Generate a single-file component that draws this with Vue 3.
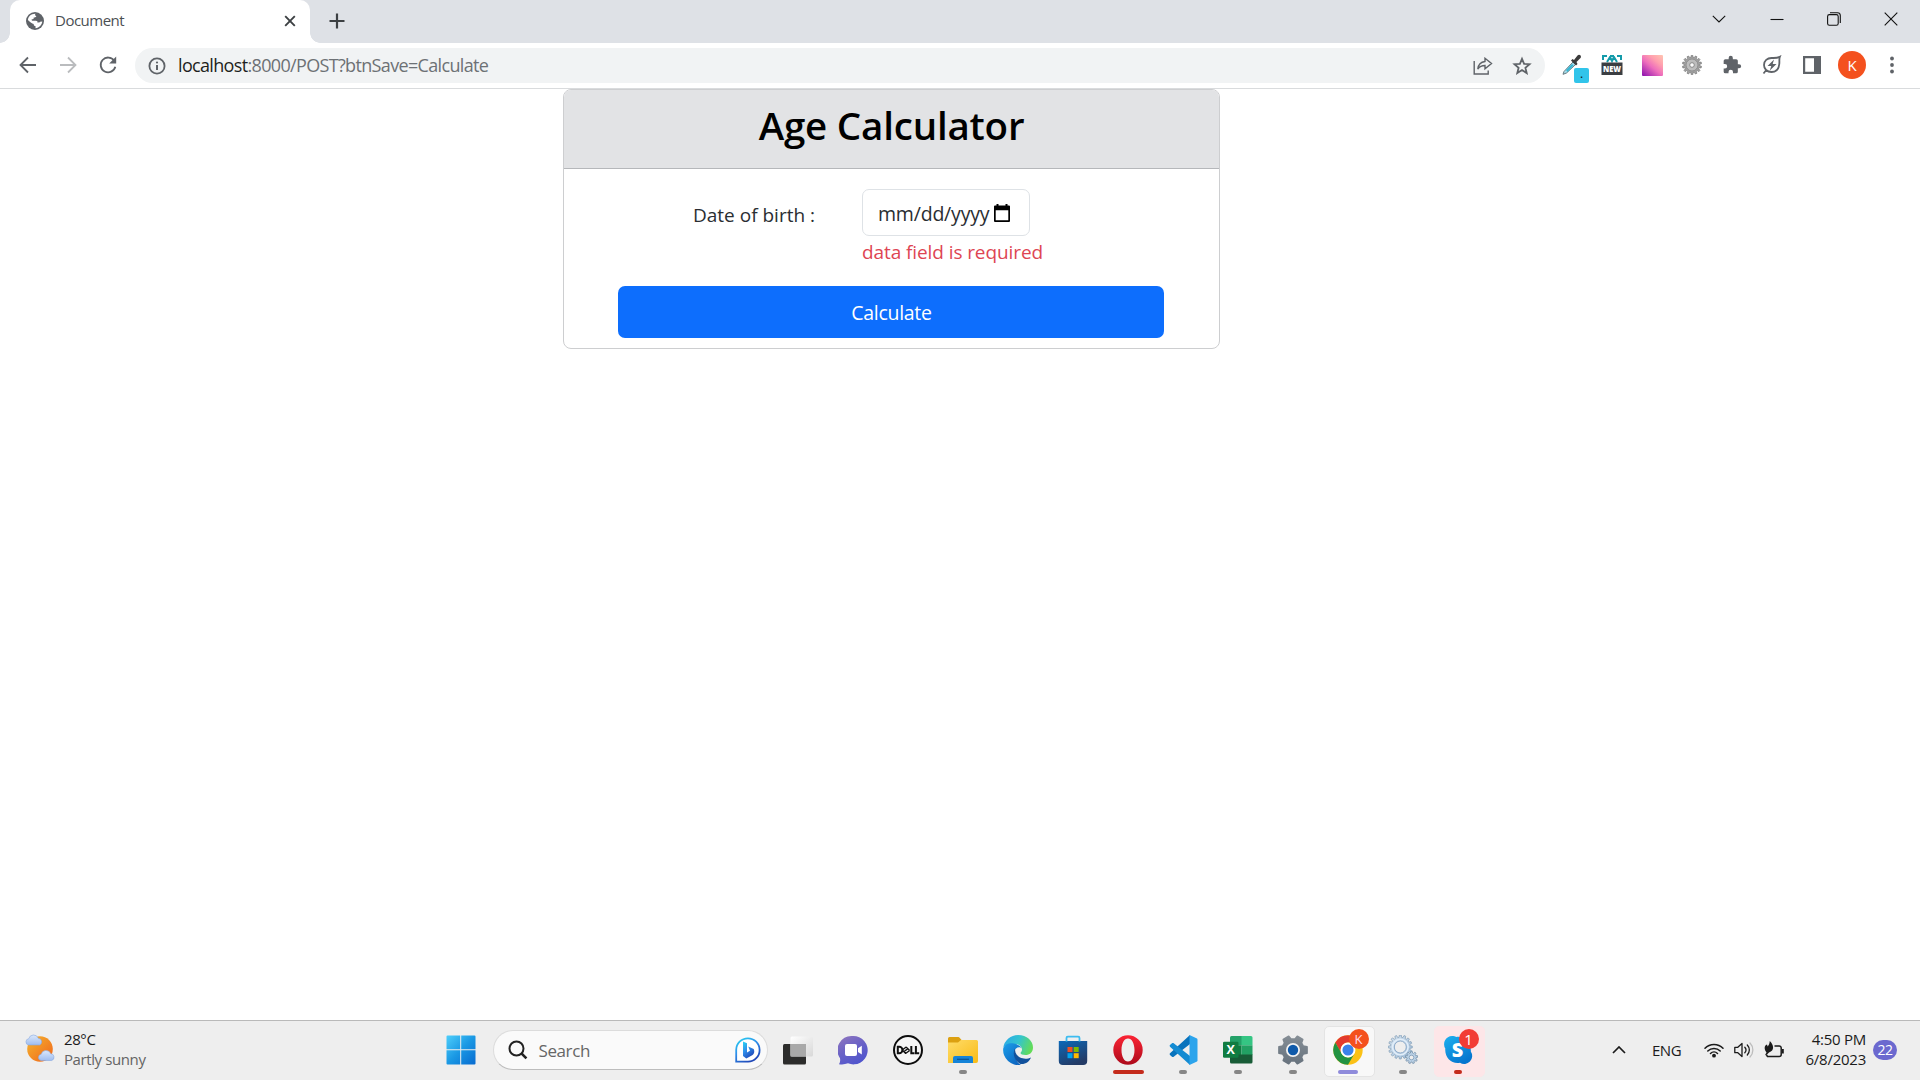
<script setup>
const gear = (teeth, outer, inner, c, half = 0.26) => {
  const pts = []
  const step = (Math.PI * 2) / teeth
  for (let i = 0; i < teeth; i++) {
    const a = i * step - Math.PI / 2
    const at = (r, t) => `${(c + r * Math.cos(t)).toFixed(2)} ${(c + r * Math.sin(t)).toFixed(2)}`
    pts.push(at(inner, a - step * (half + 0.06)), at(outer, a - step * half * 0.75), at(outer, a + step * half * 0.75), at(inner, a + step * (half + 0.06)))
  }
  return 'M' + pts.join('L') + 'Z'
}
const extGear = gear(14, 9.6, 7.6, 10)
const settingsGear = gear(6, 14.4, 11, 15, 0.28)
const bigCog = gear(16, 12, 9.8, 13)
const smallCog = gear(9, 6.2, 4.6, 7)
</script>

<template>
  <div class="screen">
    <header class="tabstrip">
      <div class="tab">
        <svg class="favicon" width="18" height="18" viewBox="0 0 18 18">
          <circle cx="9" cy="9" r="9" fill="#5f6368" />
          <path d="M9.5 1.8C8.7 2.6 9 3.8 10.3 4c-.2 1.3-1.2 1.6-2.6 1.4C7.9 7 7 7.3 5.7 7.2c-.1 1 .2 1.5 1.2 1.5h3c1.3 0 1.8.8 1.7 2 1.3 0 2-.3 2.500-.9l2.200-.2c-.5 3.600-3 6.300-6.800 6.600l.1-2c-1.300-.1-2-.8-1.900-2.200C6 11.900 3.500 9.700 1.900 8 2.200 4.500 5.300 1.600 9.500 1.800z" fill="#fff" />
        </svg>
        <span class="tab-title">Document</span>
        <svg class="tab-close" width="12" height="12" viewBox="0 0 12 12"><path d="M1.200 1.200l9.600 9.600M10.800 1.200L1.200 10.800" stroke="#3c4043" stroke-width="1.900" /></svg>
      </div>
      <svg class="plus" width="16" height="16" viewBox="0 0 16 16"><path d="M8 .5v15M.5 8h15" stroke="#3c4043" stroke-width="2.200" /></svg>
      <div class="wincontrols">
        <span><svg width="14" height="14" viewBox="0 0 14 14"><path d="M.8 3.800L7 10l6.200-6.200" class="thin" /></svg></span>
        <span><svg width="14" height="14" viewBox="0 0 14 14"><path d="M.5 7.500h13" class="thin" /></svg></span>
        <span><svg width="14" height="14" viewBox="0 0 14 14"><rect x=".6" y="2.600" width="10.600" height="10.600" rx="1.800" class="thin" /><path d="M3 .7h7.500a2.800 2.800 0 0 1 2.800 2.800V11" class="thin" /></svg></span>
        <span><svg width="14" height="14" viewBox="0 0 14 14"><path d="M.7.700l12.600 12.600M13.300.700L.7 13.300" class="thin" /></svg></span>
      </div>
    </header>

    <nav class="toolbar">
      <svg class="nav-icon" width="20" height="20" viewBox="0 0 20 20"><path d="M18 10H3M10 2.500L2.500 10l7.500 7.500" class="line" /></svg>
      <svg class="nav-icon" width="20" height="20" viewBox="0 0 20 20"><path d="M2 10h15M10 2.500l7.500 7.500-7.500 7.500" class="line pale" /></svg>
      <svg class="nav-icon" width="20" height="20" viewBox="0 0 20 20"><path d="M16.200 5.700A7.400 7.400 0 1 0 17.300 11.700" class="line" /><path d="M18.200 1.500v7h-7z" fill="#5f6368" /></svg>
      <div class="omnibox">
        <svg width="18" height="18" viewBox="0 0 18 18"><circle cx="9" cy="9" r="7.600" class="line" /><path d="M9 8v5" stroke="#5f6368" stroke-width="2" /><circle cx="9" cy="5.500" r="1.100" fill="#5f6368" /></svg>
        <p class="url"><b>localhost</b>:8000/POST?btnSave=Calculate</p>
        <svg class="share" width="20" height="18" viewBox="0 0 20 18"><path d="M1.200 4v13h14v-3.500" class="line slim" /><path d="M12 1.300l6.500 5.200-6.500 5.200V8.500c-3.200 0-5.300.8-7.200 3.500.5-4.300 2.900-7 7.200-7.500z" class="line slim" /></svg>
        <svg width="20" height="20" viewBox="0 0 20 20"><path d="M10 2.800l2.100 5 5.400.4-4.100 3.500 1.300 5.300-4.700-2.900L5.300 17l1.300-5.300-4.100-3.500 5.400-.4z" class="line" /></svg>
      </div>
      <div class="extensions">
        <span class="ext">
          <svg width="20" height="22" viewBox="0 0 20 22"><path d="M2 17.500L11 8l2.500 2.500-9 8.500-3.500 1.300z" fill="#a5dbe9" stroke="#667b82" /><path d="M4 16l6-6 1.500 1.500L5.500 18z" fill="#36b8d6" /><path d="M9 6.500l1.500-1.500 1.500 1 3.500-4.500c2-1.800 4.500.5 3 2.500L14.500 8l1 2-1.500 1.500z" fill="#3b3b3b" /></svg>
          <i class="blue-badge">.</i>
        </span>
        <span class="ext">
          <svg class="new-icon" width="22" height="26" viewBox="0 0 22 26"><path d="M2 6V2h4m3 0h4m3 0h4v4M6 8l3-5 2 4 2-4 3 5" fill="none" stroke="#149baa" stroke-width="2" /><rect x="0.500" y="8.500" width="21" height="12.500" fill="#3b3e42" /><text x="11" y="18" text-anchor="middle" font-size="9" font-weight="800" fill="#fff" textLength="18" lengthAdjust="spacingAndGlyphs">NEW</text></svg>
        </span>
        <span class="ext"><i class="gradient" /></span>
        <span class="ext">
          <svg width="20" height="20" viewBox="0 0 20 20"><path :d="extGear" fill="#a2a2a2" stroke="#777" stroke-width=".7" /><circle cx="10" cy="10" r="6" fill="#bdbdbd" stroke="#858585" stroke-width=".8" /><circle cx="10" cy="10" r="2.300" fill="#fafafa" stroke="#777" stroke-width=".8" /></svg>
        </span>
        <span class="ext"><svg width="20" height="20" viewBox="0 0 24 24"><path fill="#5f6368" d="M20.500 11H19V7a2 2 0 0 0-2-2h-4V3.500a2.500 2.500 0 0 0-5 0V5H4a2 2 0 0 0-2 2v3.800h1.500a2.700 2.700 0 0 1 0 5.400H2V20a2 2 0 0 0 2 2h3.800v-1.500a2.700 2.700 0 0 1 5.400 0V22H17a2 2 0 0 0 2-2v-4h1.500a2.500 2.500 0 0 0 0-5z" /></svg></span>
        <span class="ext"><svg width="20" height="20" viewBox="0 0 20 20"><path d="M17.800 1.800c-.8 2-.2 4.200-.5 7.200-.5 5-3.600 8-7.800 8-4.500 0-7.500-3-7.500-7 0-4.300 3.300-7 7.500-7 3.500 0 5.500.3 8.300-1.200zM4.500 14.800l-3 3.700" class="line" /><path d="M12 4.500l-6.500 6.500h3.800L7.800 15.500l6.700-6.500h-3.800z" fill="#5f6368" /></svg></span>
        <span class="ext"><svg width="18" height="18" viewBox="0 0 18 18"><path fill="#5f6368" fill-rule="evenodd" d="M0 0h18v18H0zM2.200 2.200v13.600h8.800V2.200z" /></svg></span>
        <span class="ext"><i class="avatar">K</i></span>
        <span class="ext"><svg width="4" height="18" viewBox="0 0 4 18" fill="#5f6368"><circle cx="2" cy="2.500" r="1.900" /><circle cx="2" cy="9" r="1.900" /><circle cx="2" cy="15.500" r="1.900" /></svg></span>
      </div>
    </nav>

    <main class="page">
      <form class="card" @submit.prevent>
        <h1>Age Calculator</h1>
        <div class="card-body">
          <div class="field-row">
            <label for="dob">Date of birth :</label>
            <div class="field">
              <div id="dob" class="date-input">
                <span>mm/dd/yyyy</span>
                <svg width="16" height="18" viewBox="0 0 16 18"><path fill-rule="evenodd" d="M2.500 0h2v1.500h7V0h2v1.500H15a1 1 0 0 1 1 1V17a1 1 0 0 1-1 1H1a1 1 0 0 1-1-1V2.500a1 1 0 0 1 1-1h1.500zM1.700 6.200v10h12.600v-10z" /></svg>
              </div>
              <p class="error">data field is required</p>
            </div>
          </div>
          <button type="submit"><span>Calculate</span></button>
        </div>
      </form>
    </main>

    <footer class="taskbar">
      <div class="weather">
        <svg width="32" height="30" viewBox="0 0 32 30">
          <defs>
            <linearGradient id="sun" x1="0" y1="0" x2="1" y2="1"><stop offset="0" stop-color="#f5b62d" /><stop offset="1" stop-color="#f0641c" /></linearGradient>
            <linearGradient id="cloud" x1="0" y1="0" x2="0" y2="1"><stop offset="0" stop-color="#dbe8fb" /><stop offset="1" stop-color="#9fbdf0" /></linearGradient>
          </defs>
          <circle cx="16" cy="15" r="12.800" fill="url(#sun)" />
          <path d="M4.500 11a3.200 3.200 0 0 1 .2-6.300 5 5 0 0 1 9.500-.5 3.600 3.600 0 0 1 1.500 6.800z" fill="url(#cloud)" stroke="#8aa9df" stroke-width=".6" />
          <path d="M17 26.500a3.200 3.200 0 0 1 .2-6.300 5 5 0 0 1 9.500-.5 3.500 3.500 0 0 1 1 6.800z" fill="url(#cloud)" stroke="#8aa9df" stroke-width=".6" />
        </svg>
        <p class="weather-text"><span class="temp">28°C</span><span class="cond">Partly sunny</span></p>
      </div>

      <svg class="start" width="30" height="30" viewBox="0 0 30 30">
        <defs><linearGradient id="win" gradientUnits="userSpaceOnUse" x1="0" y1="0" x2="30" y2="30"><stop offset="0" stop-color="#4fd0fb" /><stop offset=".5" stop-color="#1a98e4" /><stop offset="1" stop-color="#0769cf" /></linearGradient></defs>
        <path fill="url(#win)" d="M1.500.5H14.200v13.700H.5V1.500a1 1 0 0 1 1-1zM15.200.5h13.300a1 1 0 0 1 1 1v12.700H15.200zM.5 15.200h13.700v14.300H1.500a1 1 0 0 1-1-1zM15.200 15.200h14.300v13.300a1 1 0 0 1-1 1H15.200z" />
      </svg>
      <div class="search">
        <svg width="20" height="20" viewBox="0 0 20 20"><circle cx="8.500" cy="8.500" r="7" fill="none" stroke="#222" stroke-width="2" /><path d="M13.200 13.200l5.200 5.200" stroke="#222" stroke-width="2.600" /></svg>
        <span class="search-text">Search</span>
        <svg width="26" height="26" viewBox="0 0 26 26">
          <defs><linearGradient id="bing" x1="0" y1="0" x2=".6" y2="1"><stop offset="0" stop-color="#27d6f2" /><stop offset=".5" stop-color="#2f8eea" /><stop offset="1" stop-color="#2148b8" /></linearGradient></defs>
          <path d="M1.200 24.700V13A11.700 11.700 0 1 1 13 24.700z" fill="#fff" stroke="url(#bing)" stroke-width="1.800" />
          <path d="M8 4.500l4 1.700v9.300l3-1.800-1.800-4.200 5.500 2.500c1.300 3 .3 5-1.500 6.200L11.300 21.500 8 19z" fill="url(#bing)" />
        </svg>
      </div>

      <div class="apps">
        <span class="app">
          <svg width="30" height="30" viewBox="0 0 30 30"><defs><linearGradient id="tv" x1="0" y1="0" x2="1" y2="1"><stop offset="0" stop-color="#fff" /><stop offset="1" stop-color="#d8d8d8" /></linearGradient></defs><rect x="0" y="9" width="23" height="20.500" rx="1.500" fill="#2c2c2b" /><rect x="7.500" y="1.500" width="22.500" height="20" rx="1.500" fill="url(#tv)" /><path d="M7.500 9H23v12.500H7.500z" fill="#a9a9a9" /></svg>
        </span>
        <span class="app">
          <svg width="30" height="30" viewBox="0 0 30 30"><defs><linearGradient id="chat" x1="0" y1="0" x2=".6" y2="1"><stop offset="0" stop-color="#9277bd" /><stop offset=".5" stop-color="#6c63c6" /><stop offset="1" stop-color="#5055cd" /></linearGradient></defs><path d="M15 1a14.200 14.200 0 1 1-5 27.300c-3 1.200-6 1.300-9 .9 1.200-2 1.400-3.700 1-6A14.200 14.200 0 0 1 15 1z" fill="url(#chat)" /><rect x="7" y="9" width="12" height="12" rx="2" fill="#fff" /><path d="M20 13.200l3.800-2.500v8.800L20 17z" fill="#fff" /></svg>
        </span>
        <span class="app">
          <svg width="30" height="30" viewBox="0 0 30 30"><circle cx="15" cy="15" r="14" fill="#f6f6f6" stroke="#0d0d0d" stroke-width="2" /><g fill="none" stroke="#111" stroke-width="2"><path d="M4.800 11.800v6.500h1.400a3.200 3.200 0 0 0 0-6.500z" /><path d="M9.200 15l4-3M10.800 16.700l4.400-3.300M12.500 18.500l4.200-3M9.200 15l3.500 3.500M13 12l3.500 3.300" stroke-width="1.400" /><path d="M18.300 11v7.200h3.200M22.900 11v7.200h3.300" /></g></svg>
        </span>
        <span class="app">
          <svg width="30" height="30" viewBox="0 0 30 30"><defs><linearGradient id="fold" x1="0" y1="0" x2="1" y2="1"><stop offset="0" stop-color="#ffdc69" /><stop offset="1" stop-color="#f8bb16" /></linearGradient></defs><path d="M0 3.500A1.500 1.500 0 0 1 1.500 2h8.300c1 0 1.500.4 2 1L14 5.500V12H0z" fill="#dca011" /><path d="M0 7.500h10l3-2.500h15.500A1.500 1.500 0 0 1 30 6.500V26a2 2 0 0 1-2 2H0z" fill="url(#fold)" /><path d="M5 28v-5a2 2 0 0 1 2-2h16a2 2 0 0 1 2 2v5z" fill="#1684d8" /><path d="M9 24.300h12" stroke="#0c5493" stroke-width="1.200" /></svg>
          <i class="dot" />
        </span>
        <span class="app">
          <svg width="30" height="30" viewBox="0 0 30 30"><defs><linearGradient id="edge1" x1="0" y1=".2" x2="1" y2=".5"><stop offset="0" stop-color="#2ba9e8" /><stop offset=".5" stop-color="#33c4cf" /><stop offset="1" stop-color="#63dc58" /></linearGradient><linearGradient id="edge2" x1="0" y1="0" x2=".8" y2="1"><stop offset="0" stop-color="#1b9fea" /><stop offset="1" stop-color="#0c62be" /></linearGradient></defs><path d="M.3 12.500A15 15 0 0 1 15 0c9 0 15 6 15 12.500 0 5-3.500 7.500-7.500 7.500-3 0-5-1-5-2 0-.7 1.500-1.300 1.500-3.500 0-3-3-5.500-7.500-5.500S2.500 9.500.3 12.500z" fill="url(#edge1)" /><path d="M.2 13.500C1.500 9 6.500 7.500 11 8.500c4 .8 7 3.200 8 5.200-2-2.500-7-1.500-7.500 3-.5 4 2 11.500 6.500 13A15 15 0 0 1 .2 13.500z" fill="url(#edge2)" /><path d="M12 13.500c-3 5-.5 13 5.500 15.500 5 .5 9-2.500 10.500-6.500-5 2.500-13 1.500-15.500-5-.3-1.500-.5-2.500-.5-4z" fill="#11519c" /></svg>
        </span>
        <span class="app">
          <svg width="30" height="30" viewBox="0 0 30 30"><defs><linearGradient id="store" x1="0" y1="0" x2=".5" y2="1"><stop offset="0" stop-color="#0c69b9" /><stop offset="1" stop-color="#233b66" /></linearGradient></defs><path d="M.8 6h28.400v20a4 4 0 0 1-4 4H4.800a4 4 0 0 1-4-4z" fill="url(#store)" /><path d="M8.500 6.500V3A1.300 1.300 0 0 1 9.800 1.700h10.400A1.300 1.300 0 0 1 21.500 3v3.500" fill="none" stroke="#3dbcf0" stroke-width="1.800" /><path d="M9.500 12h5v5h-5z" fill="#f25022" /><path d="M15.700 12h5v5h-5z" fill="#7fba00" /><path d="M9.500 18.200h5v5h-5z" fill="#00a4ef" /><path d="M15.700 18.200h5v5h-5z" fill="#ffb900" /></svg>
        </span>
        <span class="app">
          <svg width="30" height="30" viewBox="0 0 30 30"><defs><linearGradient id="opera" x1="0" y1="0" x2="0" y2="1"><stop offset="0" stop-color="#fb2434" /><stop offset="1" stop-color="#ad0a1b" /></linearGradient></defs><path fill="url(#opera)" fill-rule="evenodd" d="M15 .3a14.700 14.700 0 1 1 0 29.400 14.700 14.700 0 0 1 0-29.400zM15 3.500c-3.800 0-6.500 4.800-6.500 11.500s2.700 11.500 6.500 11.500 6.500-4.800 6.500-11.500S18.800 3.500 15 3.500z" /></svg>
          <i class="dot wide" />
        </span>
        <span class="app">
          <svg width="30" height="30" viewBox="0 0 30 30"><path d="M22 0l-20 18.300a1.200 1.200 0 0 0 0 1.700l2 1.700c.5.400 1.200.4 1.700 0L22 9z" fill="#0873bd" /><path d="M22 30L2 11.700a1.200 1.200 0 0 1 0-1.700l2-1.700c.5-.4 1.200-.4 1.700 0L22 21z" fill="#148bd2" /><path d="M21.500 0l7 3.200c.6.300 1 .8 1 1.500v20.600c0 .7-.4 1.200-1 1.500l-7 3.200z" fill="#2ca4ec" /></svg>
          <i class="dot" />
        </span>
        <span class="app">
          <svg width="30" height="30" viewBox="0 0 30 30"><path d="M8.500 1h10.500v9.300H7V2.500A1.500 1.500 0 0 1 8.500 1z" fill="#24a168" /><path d="M18.500 1h9.500a1.500 1.500 0 0 1 1.500 1.500v7.800h-11z" fill="#35c583" /><path d="M7 10.300h11.500V20H7z" fill="#107c41" /><path d="M18.500 10.300h11V20h-11z" fill="#22a063" /><path d="M7 19.500h22.500V27a1.500 1.500 0 0 1-1.500 1.500H8.500A1.500 1.500 0 0 1 7 27z" fill="#185c37" /><rect x="0" y="6.700" width="15.500" height="16" rx="1.300" fill="#107c41" /><text x="7.600" y="19.200" text-anchor="middle" font-size="12.500" font-weight="700" fill="#fff">X</text></svg>
          <i class="dot" />
        </span>
        <span class="app">
          <svg width="30" height="30" viewBox="0 0 30 30"><defs><linearGradient id="cogm" gradientUnits="userSpaceOnUse" x1="0" y1="0" x2="15" y2="30"><stop offset="0" stop-color="#8b939a" /><stop offset="1" stop-color="#68737e" /></linearGradient></defs><path :d="settingsGear" fill="url(#cogm)" stroke="url(#cogm)" stroke-width="1.600" stroke-linejoin="round" transform="rotate(30 15 15)" /><circle cx="15" cy="15" r="6.100" fill="#0f5aaa" stroke="#f3f3f3" stroke-width="1.800" /></svg>
          <i class="dot" />
        </span>
        <span class="app tile">
          <svg width="30" height="30" viewBox="0 0 30 30"><circle cx="15" cy="15" r="14.700" fill="#fbc116" /><path d="M15 .3a14.700 14.700 0 0 1 12.700 7.300H15a7.400 7.400 0 0 0-6.500 10.900L2.300 7.600A14.700 14.700 0 0 1 15 .3z" fill="#e33b2e" /><path d="M2.300 7.600l6.300 11a7.400 7.400 0 0 0 12.800.2L15 29.700A14.700 14.700 0 0 1 2.300 7.600z" fill="#229342" /><circle cx="15" cy="15" r="6.500" fill="#3b82ea" stroke="#fff" stroke-width="1.900" /></svg>
          <i class="badge chrome-badge">K</i>
          <i class="dot active" />
        </span>
        <span class="app">
          <svg width="30" height="30" viewBox="0 0 30 30"><defs><linearGradient id="cogs" x1="0" y1="0" x2="1" y2="1"><stop offset="0" stop-color="#d5e3ef" /><stop offset="1" stop-color="#a0bddb" /></linearGradient></defs><path :d="bigCog" fill="url(#cogs)" stroke="#89a3ba" stroke-width=".8" transform="translate(-.7 -1)" /><circle cx="12.300" cy="12" r="6" fill="#eee" stroke="#8facca" stroke-width="1" /><circle cx="12.300" cy="12" r="7.800" fill="none" stroke="#e2eef9" stroke-width="1.600" /><path :d="smallCog" fill="#b9d0e5" stroke="#7692ab" stroke-width=".8" transform="translate(16.500 15.500)" /><circle cx="23.500" cy="22.500" r="2.300" fill="#eee" stroke="#7d9ab6" stroke-width=".8" /></svg>
          <i class="dot" />
        </span>
        <span class="app tile alert">
          <svg width="30" height="30" viewBox="0 0 30 30"><defs><linearGradient id="sky" x1="0" y1="0" x2=".6" y2="1"><stop offset="0" stop-color="#1db0ee" /><stop offset="1" stop-color="#0676cf" /></linearGradient></defs><path d="M9 1c2 0 3 .4 4.200 1C21 .8 28.500 7 27.800 16.500A8 8 0 0 1 17 27.800C8 29.300 1.500 22 2.300 13.500A8.200 8.200 0 0 1 9 1z" fill="url(#sky)" /><text x="14.500" y="22.200" text-anchor="middle" font-size="20" font-weight="800" fill="#fff">S</text></svg>
          <i class="badge skype-badge">1</i>
          <i class="dot red" />
        </span>
      </div>

      <div class="tray">
        <svg class="chev" width="14" height="8" viewBox="0 0 14 8"><path d="M1 7l6-6 6 6" fill="none" stroke="#1b1b1b" stroke-width="1.700" /></svg>
        <span class="lang">ENG</span>
        <svg class="wifi" width="20" height="16" viewBox="0 0 20 16"><g fill="none" stroke="#1b1b1b" stroke-width="1.500" stroke-linecap="round"><path d="M1 6.300a12.300 12.300 0 0 1 18 0M3.800 9a8.700 8.700 0 0 1 12.400 0M6.500 11.500a5 5 0 0 1 7 0" /></g><circle cx="10" cy="13.700" r="1.900" fill="#1b1b1b" /></svg>
        <svg class="vol" width="20" height="16" viewBox="0 0 20 16"><g fill="none" stroke="#1b1b1b" stroke-width="1.300" stroke-linecap="round" stroke-linejoin="round"><path d="M.8 5.300h3L8 1.500v13l-4.200-3.800h-3zM10.800 5.300a4 4 0 0 1 0 5.400M13.300 3a7.200 7.200 0 0 1 0 10" /><path d="M16 1a10 10 0 0 1 0 14" stroke="#bdbdbd" /></g></svg>
        <svg class="batt" width="20" height="18" viewBox="0 0 20 18"><path d="M10.500 5h4.700a2 2 0 0 1 2 2v6.500a2 2 0 0 1-2 2H3.500l-1-1.500" fill="none" stroke="#1b1b1b" stroke-width="1.500" /><path d="M18 8h1.800v4.500H18z" fill="#1b1b1b" /><path d="M5.800 0c4 3.800 5 9.500-.8 11.500l-3 3-.8-.8 1.300-2.200C-.3 8 .3 4.500 3 3.500l.7 2C5 4 5.500 2.500 5.800 0z" fill="#1b1b1b" /></svg>
        <p class="clock"><span class="time">4:50 PM</span><span class="date">6/8/2023</span></p>
        <i class="count">22</i>
      </div>
    </footer>
  </div>
</template>

<style>
body { margin: 0; overflow: hidden; }
</style>

<style scoped>
* { box-sizing: border-box; margin: 0; }
.screen { width: 1920px; height: 1080px; display: flex; flex-direction: column; background: #fff; font-family: "Open Sans", "Noto Sans", sans-serif; }
svg { display: block; flex: none; }
i { font-style: normal; }
p, span { white-space: nowrap; }
.thin { fill: none; stroke: #111; stroke-width: 1.1; }
.line { fill: none; stroke: #5f6368; stroke-width: 1.8; }
.slim { stroke-width: 1.4; }
.pale { stroke: #babcbe; }

.tabstrip { height: 43px; display: flex; background: #dee1e6; }
.tab { position: relative; width: 300px; height: 43px; margin-left: 10px; padding: 0 14px 1px 16px; display: flex; align-items: center; background: #fff; border-radius: 10px 10px 0 0; }
.tab::before, .tab::after { content: ""; position: absolute; bottom: 0; width: 10px; height: 10px; }
.tab::before { left: -10px; background: radial-gradient(circle at 0 0, transparent 9.5px, #fff 10px); }
.tab::after { right: -10px; background: radial-gradient(circle at 100% 0, transparent 9.5px, #fff 10px); }
.tab-title { margin: -2px 0 0 11px; flex: 1; font-size: 15px; letter-spacing: -0.5px; color: #4b4f53; }
.plus { margin: 13px 0 0 19px; }
.wincontrols { margin: 0 0 0 auto; display: flex; height: 37px; }
.wincontrols span { width: 57.3px; display: flex; align-items: center; justify-content: center; }

.toolbar { height: 46px; display: flex; align-items: center; border-bottom: 1px solid #d9dbdd; }
.nav-icon { margin: -1px 0 0 18px; }
.nav-icon + .nav-icon { margin-left: 20px; }
.omnibox { width: 1410px; height: 35px; margin-left: 17px; padding: 0 13px 0 13px; display: flex; align-items: center; border-radius: 18px; background: #f1f3f4; }
.url { flex: 1; margin: -1px 0 0 12px; font-size: 18px; line-height: 34px; letter-spacing: -0.66px; color: #6d7175; }
.url b { font-weight: 400; color: #1d1f21; }
.share { margin-right: 19px; }
.extensions { display: flex; margin: -1px 0 0 7px; }
.ext { position: relative; width: 40px; height: 34px; display: flex; align-items: center; justify-content: center; }
.new-icon { margin-top: 4px; }
.blue-badge { position: absolute; left: 22px; top: 20px; width: 15px; height: 15px; border-radius: 2px; background: #31c4ea; color: #111; font-size: 12px; line-height: 12px; text-align: center; }
.gradient { width: 21px; height: 21px; border-radius: 1px; background: linear-gradient(40deg, #8a0fae 0%, #ee6ebc 45%, #ff9fae 70%, #ffc6b2 100%); }
.avatar { width: 28px; height: 28px; border-radius: 50%; background: #f4511e; color: #fff; font-size: 15px; line-height: 28px; text-align: center; }

.page { height: 931px; display: flex; justify-content: center; align-items: flex-start; padding-right: 137px; }
.card { width: 657px; height: 260px; border: 1px solid #cdced0; border-radius: 8px; background: #fff; color: #2a2e32; font-size: 20px; }
h1 { height: 79px; padding-top: 11px; border-bottom: 1px solid #b5b7ba; border-radius: 7px 7px 0 0; background: #e2e3e5; color: #000; font-size: 38.5px; line-height: 48px; font-weight: 600; letter-spacing: -0.2px; text-align: center; }
.card-body { padding: 20px 54px 0; }
.field-row { display: flex; }
label { width: 169px; margin-left: 75px; line-height: 53px; font-size: 19px; letter-spacing: 0; }
.date-input { width: 168px; height: 47px; padding: 0 19px 0 15px; display: flex; align-items: center; justify-content: space-between; border: 1px solid #dee2e6; border-radius: 7px; }
.date-input span { width: 112px; overflow: hidden; font-size: 19.5px; line-height: 44px; letter-spacing: -0.2px; padding-top: 2px; }
.error { margin-top: 1px; color: #de4553; font-size: 19px; line-height: 30px; letter-spacing: -0.09px; }
button { display: block; width: 546px; height: 52px; margin-top: 19px; padding: 2px 0 0 1px; border: 0; border-radius: 7px; background: #0d6efd; color: #fff; font: 400 19.5px/50px "Open Sans", sans-serif; letter-spacing: -0.3px; }

.taskbar { height: 60px; display: flex; align-items: center; border-top: 1px solid #b9b9b9; background: #eee; }
.weather { width: 446px; padding-left: 24px; display: flex; align-items: center; }
.weather svg { margin-top: -4px; }
.weather-text { margin: -4px 0 0 8px; display: flex; flex-direction: column; font-size: 15px; line-height: 20px; letter-spacing: -0.4px; }
.temp { color: #1b1b1b; }
.cond { color: #646464; }
.start { margin-top: -1px; }
.search { width: 275px; height: 40px; margin: -1px 2.500px 0 17px; padding: 0 6.500px 0 13.500px; display: flex; align-items: center; border: 1px solid #dcdcdc; border-bottom-color: #bdbdbd; border-radius: 20px; background: #fafafa; }
.search-text { flex: 1; margin-left: 11px; font-size: 17px; letter-spacing: -0.4px; color: #666; }
.apps { display: flex; }
.app { position: relative; width: 55px; height: 59px; display: flex; align-items: center; justify-content: center; }
.app svg { margin-top: -2px; }
.tile::before { content: ""; position: absolute; left: 3px; top: 5px; width: 49px; height: 49px; border-radius: 5px; background: #f8f8f8; border: 1px solid #e4e4e4; }
.tile svg { position: relative; }
.alert::before { background: #fde6e8; border-color: #fde6e8; }
.dot { position: absolute; left: 23.500px; top: 49px; width: 8px; height: 4px; border-radius: 2px; background: #868686; }
.dot.wide { left: 12.500px; width: 31px; background: #c42b1c; }
.dot.active { left: 17.500px; width: 20px; background: #8f8bdb; }
.dot.red { background: #c42b1c; }
.badge { position: absolute; left: 28px; top: 8px; width: 20px; height: 20px; border-radius: 50%; background: #f4511e; color: #fde; font-size: 13px; line-height: 20px; text-align: center; }
.skype-badge { background: #f23c35; color: #fff; font-size: 15px; }
.tray { flex: 1; display: flex; align-items: center; padding-bottom: 2px; color: #1b1b1b; }
.chev { margin-left: 126px; }
.lang { width: 29px; margin-left: 26.500px; font-size: 15px; line-height: 20px; letter-spacing: -0.5px; }
.wifi { margin-left: 23px; }
.vol { margin-left: 10px; }
.batt { margin-left: 10px; }
.clock { width: 82px; margin-top: -2px; display: flex; flex-direction: column; align-items: flex-end; font-size: 15px; line-height: 20px; letter-spacing: -0.25px; }
.count { width: 24px; height: 20px; margin-left: 7px; border-radius: 10px; background: #6b69cf; color: #fff; font-size: 14px; line-height: 20px; text-align: center; letter-spacing: -0.5px; }
</style>
